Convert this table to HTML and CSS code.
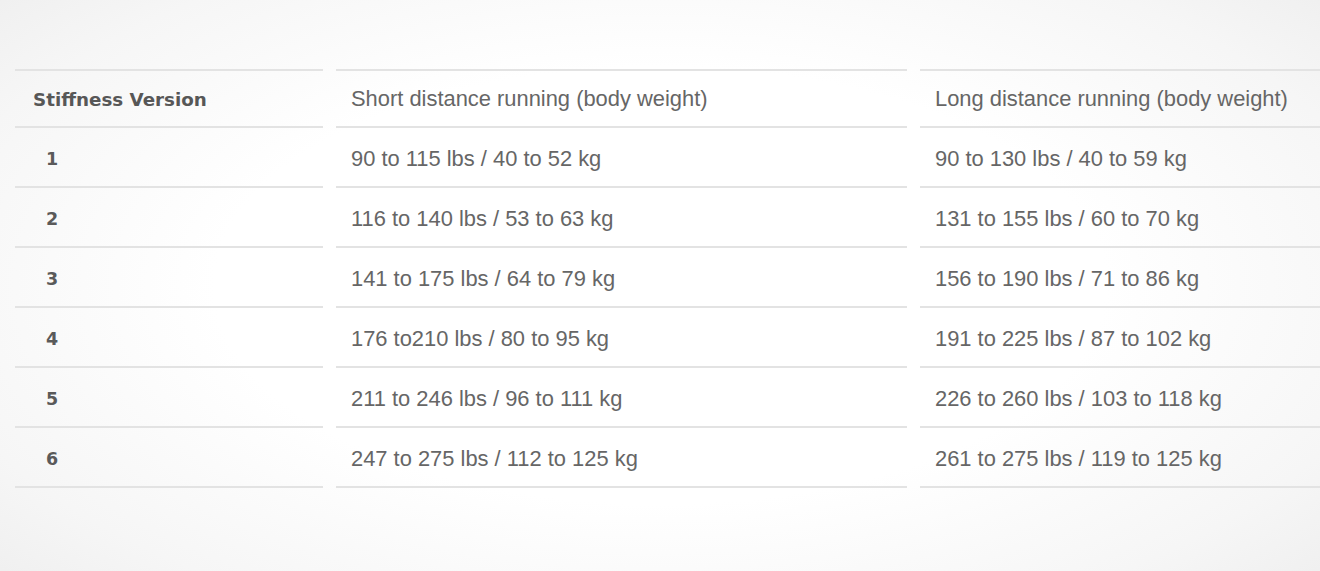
FILE: index.html
```html
<!DOCTYPE html>
<html lang="en">
<head>
<meta charset="utf-8">
<title>Stiffness Version</title>
<link rel="stylesheet" href="styles.css">
</head>
<body>
<div class="page">
  <div class="table">
    <div class="cell head first">Stiffness Version</div>
    <div class="cell head">Short distance running (body weight)</div>
    <div class="cell head">Long distance running (body weight)</div>

    <div class="cell num">1</div>
    <div class="cell">90 to 115 lbs / 40 to 52 kg</div>
    <div class="cell">90 to 130 lbs / 40 to 59 kg</div>

    <div class="cell num">2</div>
    <div class="cell">116 to 140 lbs / 53 to 63 kg</div>
    <div class="cell">131 to 155 lbs / 60 to 70 kg</div>

    <div class="cell num">3</div>
    <div class="cell">141 to 175 lbs / 64 to 79 kg</div>
    <div class="cell">156 to 190 lbs / 71 to 86 kg</div>

    <div class="cell num">4</div>
    <div class="cell">176 to210 lbs / 80 to 95 kg</div>
    <div class="cell">191 to 225 lbs / 87 to 102 kg</div>

    <div class="cell num">5</div>
    <div class="cell">211 to 246 lbs / 96 to 111 kg</div>
    <div class="cell">226 to 260 lbs / 103 to 118 kg</div>

    <div class="cell num">6</div>
    <div class="cell">247 to 275 lbs / 112 to 125 kg</div>
    <div class="cell">261 to 275 lbs / 119 to 125 kg</div>
  </div>
</div>
</body>
</html>
```

FILE: styles.css
```css
html, body {
  margin: 0;
  padding: 0;
  width: 1320px;
  height: 571px;
  overflow: hidden;
}

body {
  background: radial-gradient(ellipse 75% 85% at 50% 50%, #ffffff 45%, #f6f6f6 75%, #ebebeb 100%);
  font-family: "Liberation Sans", Arial, sans-serif;
}

.page {
  padding: 69px 0 0 15px;
}

.table {
  display: grid;
  grid-template-columns: 308px 571px 400px;
  column-gap: 13px;
}

.cell {
  display: flex;
  align-items: center;
  box-sizing: border-box;
  height: 60px;
  padding: 3px 0 0 15px;
  border-bottom: 2px solid #e3e3e3;
  font-size: 21.9px;
  color: #666666;
  white-space: nowrap;
}

.head {
  height: 59px;
  padding-top: 1px;
  border-top: 2px solid #e3e3e3;
}

.first {
  padding-left: 18px;
  font-family: "DejaVu Sans", Verdana, sans-serif;
  font-weight: bold;
  font-size: 18.3px;
  color: #575757;
}

.num {
  padding-left: 31px;
  font-family: "DejaVu Sans", Verdana, sans-serif;
  font-weight: bold;
  font-size: 17.5px;
  color: #5a5a5a;
}
```
